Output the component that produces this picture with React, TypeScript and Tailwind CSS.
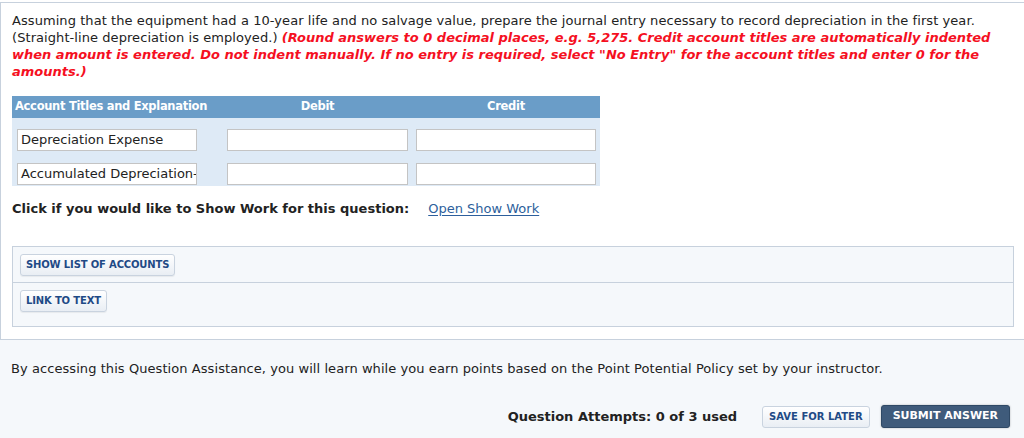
import React from "react";

const font = { fontFamily: '"DejaVu Sans", Verdana, sans-serif' };

const AssistButton = ({ label }: { label: string }) => (
  <button
    type="button"
    className="h-[22px] px-[5px] rounded-[3px] border border-[#c9d3df] bg-gradient-to-b from-white to-[#e9eef4] text-[10px] font-bold tracking-[-0.15px] text-[#1f4a86] shadow-[0_1px_1px_rgba(0,0,0,0.06)]"
  >
    {label}
  </button>
);

export default function App() {
  return (
    <div className="w-[1024px] h-[438px] bg-[#f5f8fb] text-[13px] text-[#222] overflow-hidden" style={font}>
      <div className="h-[2px] bg-white" />
      {/* Question panel */}
      <div className="h-[338px] bg-white border-t border-l border-b border-[#c7d1dd] pl-[11px] pr-[10px] pt-[9px]">
        <p className="leading-[17px] tracking-[0.07px]">
          Assuming that the equipment had a 10-year life and no salvage value, prepare the journal entry necessary to record depreciation in the first year.
          (Straight-line depreciation is employed.){" "}
          <span className="font-bold italic text-[#f5101f] tracking-normal">
            (Round answers to 0 decimal places, e.g. 5,275. Credit account titles are automatically indented when amount is entered. Do not indent manually. If no entry is required, select "No Entry" for the account titles and enter 0 for the amounts.)
          </span>
        </p>

        {/* Journal table */}
        <div className="mt-[16px] w-[588px]">
          <div className="h-[22px] bg-[#6a9dc8] text-white font-bold text-[11.5px] tracking-[-0.3px] flex items-center whitespace-nowrap">
            <div className="w-[211px] pl-[3px]">Account Titles and Explanation</div>
            <div className="w-[189px] text-center">Debit</div>
            <div className="flex-1 text-center">Credit</div>
          </div>
          <div className="bg-[#deeaf6] pt-[11px] pb-[1px] flex flex-col gap-[12px]">
            {["Depreciation Expense", "Accumulated Depreciation-"].map((t) => (
              <div key={t} className="flex items-center h-[22px]">
                <div className="ml-[5px] w-[180px] h-[22px] bg-white border border-[#c4c4c4] px-[3px] flex items-center overflow-hidden whitespace-nowrap">
                  {t}
                </div>
                <div className="ml-[30px] w-[181px] h-[22px] bg-white border border-[#c4c4c4]" />
                <div className="ml-[8px] w-[180px] h-[22px] bg-white border border-[#c4c4c4]" />
              </div>
            ))}
          </div>
        </div>

        <div className="mt-[13px] flex items-center">
          <span className="font-bold">Click if you would like to Show Work for this question:</span>
          <a className="ml-[19px] text-[#2d5f9c] underline underline-offset-2">Open Show Work</a>
        </div>

        {/* Assistance */}
        <div className="mt-[27px] w-[1002px] border border-[#c7d1dd] bg-[#f5f8fb]">
          <div className="h-[36px] pl-[7px] pt-[7px] border-b border-[#c7d1dd]">
            <AssistButton label="SHOW LIST OF ACCOUNTS" />
          </div>
          <div className="h-[43px] pl-[7px] pt-[7px]">
            <AssistButton label="LINK TO TEXT" />
          </div>
        </div>
      </div>

      {/* Footer */}
      <div className="pl-[11px] pt-[21px]">
        <p className="leading-[16px] tracking-[0.07px]">
          By accessing this Question Assistance, you will learn while you earn points based on the Point Potential Policy set by your instructor.
        </p>
        <div className="mt-[28px] flex items-center justify-end pr-[14px]">
          <span className="font-bold">Question Attempts: 0 of 3 used</span>
          <button
            type="button"
            className="ml-[25px] h-[22px] px-[6px] rounded-[3px] border border-[#c9d3df] bg-gradient-to-b from-white to-[#e9eef4] text-[10px] font-bold text-[#1f4a86]"
          >
            SAVE FOR LATER
          </button>
          <button
            type="button"
            className="ml-[11px] h-[23px] px-[11px] rounded-[3px] border border-[#2f4966] bg-[#3f5b7b] text-[11px] font-bold text-white shadow-[0_0_2px_rgba(0,0,0,0.3)]"
          >
            SUBMIT ANSWER
          </button>
        </div>
      </div>
    </div>
  );
}
